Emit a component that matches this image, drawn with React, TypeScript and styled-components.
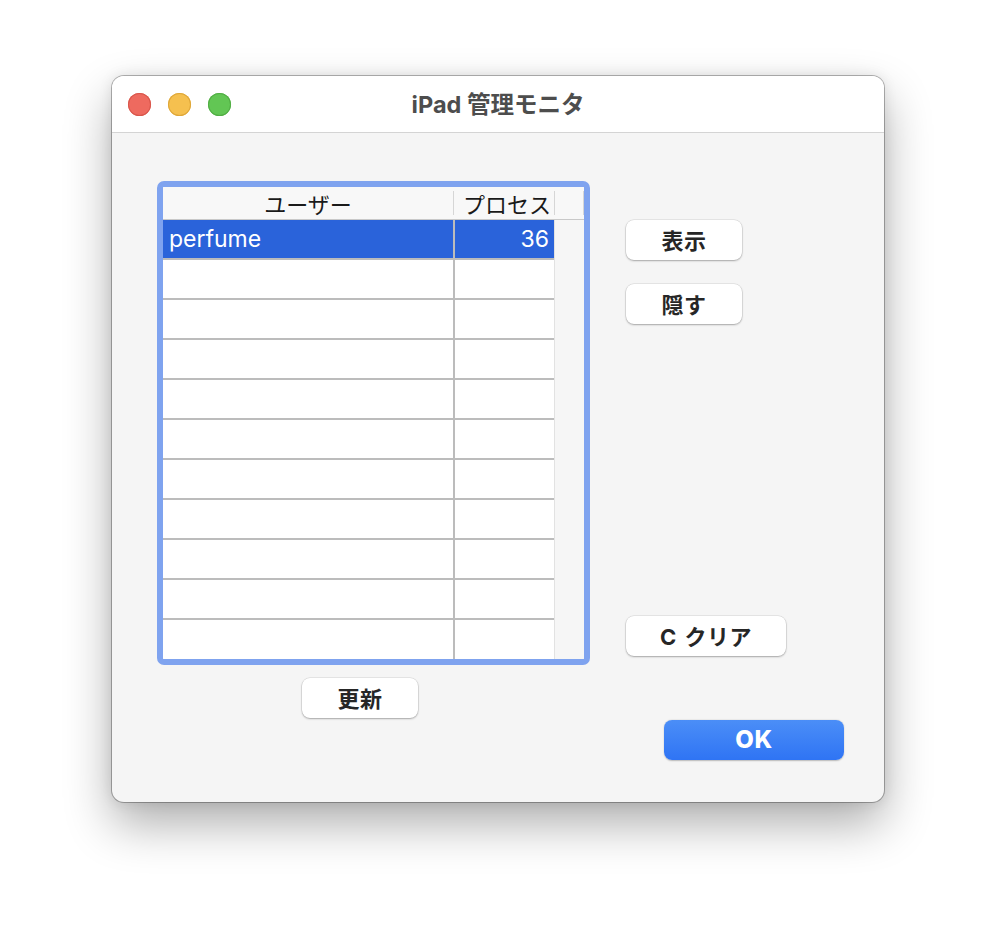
import React from "react";
import styled, { createGlobalStyle } from "styled-components";

const Global = createGlobalStyle`
  html, body { margin: 0; padding: 0; background: #ffffff; }
  body { font-family: Inter, "Noto Sans CJK JP", sans-serif; }
`;

const Page = styled.div`
  padding: 76px 0 0 112px;
  height: 950px;
  box-sizing: border-box;
`;

const Window = styled.div`
  width: 772px;
  height: 726px;
  border-radius: 12px;
  background: #f5f5f5;
  box-shadow: 0 0 0 1px rgba(0, 0, 0, 0.28), 0 22px 48px rgba(0, 0, 0, 0.32),
    0 0 14px rgba(0, 0, 0, 0.1);
  overflow: hidden;
  display: flex;
  flex-direction: column;
`;

const TitleBar = styled.div`
  height: 56px;
  background: #ffffff;
  border-bottom: 1px solid #d4d4d4;
  display: flex;
  align-items: center;
  position: relative;
  padding-left: 16px;
  gap: 17px;
`;

const Light = styled.span<{ $c: string; $b: string }>`
  width: 23px;
  height: 23px;
  border-radius: 50%;
  background: ${(p) => p.$c};
  box-shadow: inset 0 0 0 1px ${(p) => p.$b};
`;

const Title = styled.div`
  position: absolute;
  left: 0;
  right: 0;
  top: 0;
  bottom: 0;
  display: flex;
  align-items: center;
  justify-content: center;
  font-family: Inter, "Noto Sans CJK JP", sans-serif;
  font-size: 23.5px;
  font-weight: 700;
  color: #4d4d4d;
  pointer-events: none;
  padding-bottom: 2px;
`;

const Body = styled.div`
  flex: 1;
  display: flex;
  padding: 48px 0 0 45px;
`;

const LeftCol = styled.div`
  display: flex;
  flex-direction: column;
`;

const RightCol = styled.div`
  display: flex;
  flex-direction: column;
  align-items: flex-start;
  padding-top: 39px;
  margin-left: 36px;
`;

const Ring = styled.div`
  width: 433px;
  height: 484px;
  box-sizing: border-box;
  border: 6px solid #7fa3ef;
  border-radius: 7px;
  overflow: hidden;
  display: flex;
  flex-direction: column;
  background: #ffffff;
`;

const HeaderRow = styled.div`
  display: grid;
  grid-template-columns: 290px 2px 99px 30px;
  height: 32px;
  background: #f8f8f8;
  border-bottom: 1px solid #c9c9c9;
  flex-shrink: 0;
`;

const HeadCell = styled.div<{ $align?: string }>`
  display: flex;
  align-items: center;
  justify-content: ${(p) => p.$align || "center"};
  font-family: "Noto Sans CJK JP", sans-serif;
  font-size: 22px;
  color: #1a1a1a;
  padding-right: ${(p) => (p.$align === "flex-end" ? "3px" : "0")};
  white-space: nowrap;
`;

const HeadSep = styled.div`
  align-self: center;
  width: 1px;
  height: 24px;
  background: #d6d6d6;
`;

const ScrollHead = styled.div`
  border-left: 1px solid #d6d6d6;
  border-right: 1px solid #d6d6d6;
  margin: 4px 0;
  box-sizing: border-box;
`;

const Row = styled.div`
  display: grid;
  grid-template-columns: 290px 2px 99px 30px;
  height: 40px;
  flex-shrink: 0;
`;

const Cell = styled.div<{ $sel?: boolean; $right?: boolean; $last?: boolean }>`
  background: ${(p) => (p.$sel ? "#2a63da" : "#ffffff")};
  color: ${(p) => (p.$sel ? "#ffffff" : "#1a1a1a")};
  border-bottom: 2px solid ${(p) => (p.$last ? "transparent" : "#bcbcbc")};
  display: flex;
  align-items: center;
  justify-content: ${(p) => (p.$right ? "flex-end" : "flex-start")};
  padding: 0 5px 1px 6px;
  font-size: 23px;
  font-family: Inter, "Noto Sans CJK JP", sans-serif;
`;

const ColSep = styled.div`
  background: #bcbcbc;
`;

const ScrollCell = styled.div`
  background: #f6f6f6;
  border-left: 1px solid #e2e2e2;
`;

const Button = styled.button<{ $w: number; $primary?: boolean }>`
  width: ${(p) => p.$w}px;
  height: 40px;
  border: none;
  border-radius: 8px;
  font-family: Inter, "Noto Sans CJK JP", sans-serif;
  font-size: ${(p) => (p.$primary ? "24px" : "22px")};
  font-weight: ${(p) => (p.$primary ? 800 : 700)};
  color: ${(p) => (p.$primary ? "#ffffff" : "#262626")};
  background: ${(p) =>
    p.$primary ? "linear-gradient(#4b8ef7, #2f74f4)" : "#ffffff"};
  box-shadow: ${(p) =>
    p.$primary
      ? "0 0.5px 1.5px rgba(0,0,0,0.25)"
      : "0 0 0 0.5px rgba(0,0,0,0.12), 0 1px 2px rgba(0,0,0,0.28)"};
  padding: 0 0 2px 0;
  display: flex;
  align-items: center;
  justify-content: center;
  letter-spacing: 0.5px;
`;

const UpdateButton = styled(Button)`
  margin: 13px 0 0 145px;
`;

const HideButton = styled(Button)`
  margin-top: 24px;
`;

const ClearButton = styled(Button)`
  margin-top: 292px;
  word-spacing: 2px;
`;

const OkButton = styled(Button)`
  margin: 64px 0 0 38px;
`;

const rows = [
  { user: "perfume", count: "36" },
  ...Array.from({ length: 10 }, () => ({ user: "", count: "" })),
];

export default function App() {
  return (
    <Page>
      <Global />
      <Window>
        <TitleBar>
          <Light $c="#ee6a5f" $b="#d8574c" />
          <Light $c="#f5c04f" $b="#dea73a" />
          <Light $c="#62c654" $b="#52ad45" />
          <Title>iPad 管理モニタ</Title>
        </TitleBar>
        <Body>
          <LeftCol>
            <Ring>
              <HeaderRow>
                <HeadCell>ユーザー</HeadCell>
                <HeadSep />
                <HeadCell $align="flex-end">プロセス</HeadCell>
                <ScrollHead />
              </HeaderRow>
              {rows.map((r, i) => {
                const sel = i === 0;
                const last = i === rows.length - 1;
                return (
                  <Row key={i}>
                    <Cell $sel={sel} $last={last}>
                      {r.user}
                    </Cell>
                    <ColSep />
                    <Cell $sel={sel} $right $last={last}>
                      {r.count}
                    </Cell>
                    <ScrollCell />
                  </Row>
                );
              })}
            </Ring>
            <UpdateButton $w={116}>更新</UpdateButton>
          </LeftCol>
          <RightCol>
            <Button $w={116}>表示</Button>
            <HideButton $w={116}>隠す</HideButton>
            <ClearButton $w={160}>C クリア</ClearButton>
            <OkButton $w={180} $primary>
              OK
            </OkButton>
          </RightCol>
        </Body>
      </Window>
    </Page>
  );
}
